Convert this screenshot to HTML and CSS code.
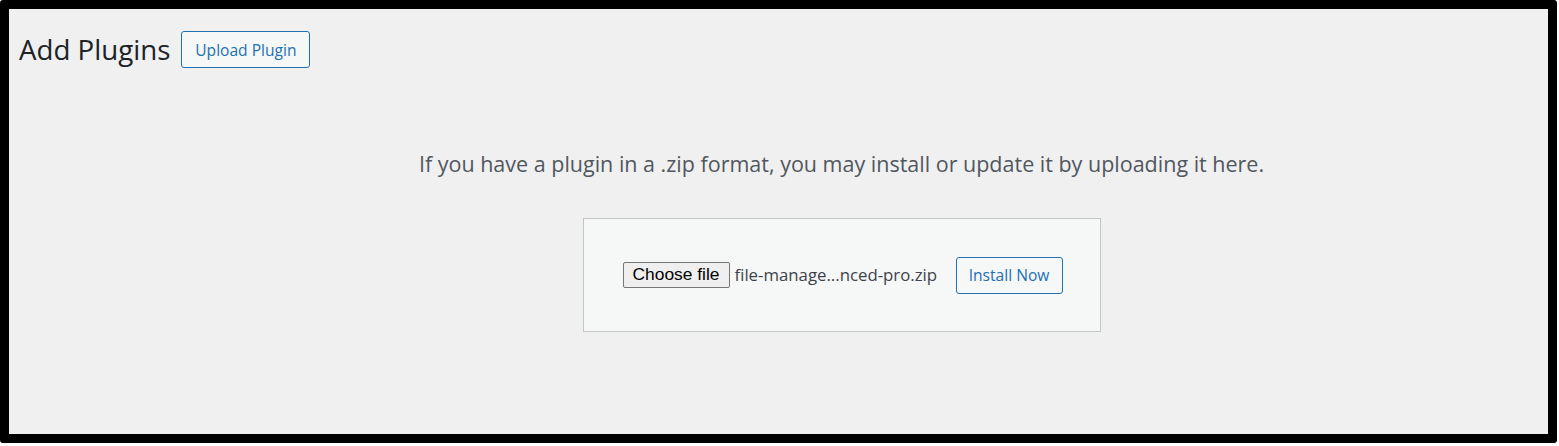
FILE: index.html
```html
<!DOCTYPE html>
<html lang="en">
<head>
<meta charset="utf-8">
<title>Add Plugins</title>
<link rel="stylesheet" href="styles.css">
</head>
<body>
<div class="frame">
  <div class="wrap">
    <div class="header">
      <h1 class="title">Add Plugins</h1>
      <a class="btn upload-btn" href="#">Upload Plugin</a>
    </div>
    <div class="upload">
      <p class="help">If you have a plugin in a .zip format, you may install or update it by uploading it here.</p>
      <form class="form">
        <span class="file">
          <button type="button" class="choose">Choose file</button>
          <span class="fname">file-manage...nced-pro.zip</span>
        </span>
        <button type="button" class="btn install">Install Now</button>
      </form>
    </div>
  </div>
</div>
</body>
</html>
```
FILE: styles.css
```css
html, body {
  margin: 0;
  padding: 0;
  background: #ffffff;
}
.frame {
  width: 1557px;
  height: 443px;
  box-sizing: border-box;
  border: 9px solid #000;
  border-radius: 3px;
  background: #f0f0f1;
  font-family: "Open Sans", "Noto Sans", sans-serif;
}
.wrap {
  padding: 22px 10px 0 10px;
}
.header {
  display: flex;
  align-items: center;
  gap: 11px;
}
.title {
  margin: 0;
  font-size: 27.7px;
  font-weight: 400;
  color: #1d2327;
  line-height: 37px;
}
.btn {
  display: inline-flex;
  align-items: center;
  justify-content: center;
  box-sizing: border-box;
  border: 1px solid #2271b1;
  border-radius: 3px;
  background: #f6f7f7;
  color: #2271b1;
  font-family: "Open Sans", "Noto Sans", sans-serif;
  font-size: 15.6px;
  text-decoration: none;
  padding: 0;
}
.upload-btn {
  width: 129px;
  height: 37px;
}
.upload {
  display: flex;
  flex-direction: column;
  align-items: center;
  padding-left: 126px;
}
.help {
  margin: 0;
  padding: 81px 0 0 0;
  font-size: 21.5px;
  line-height: 30px;
  color: #50575e;
}
.form {
  margin-top: 39px;
  margin-left: 0;
  width: 518px;
  height: 114px;
  box-sizing: border-box;
  border: 1px solid #c3c4c7;
  background: #f6f7f7;
  display: flex;
  align-items: center;
  justify-content: space-between;
  padding: 0 37px 0 39px;
}
.file {
  display: flex;
  align-items: center;
  gap: 5px;
  margin-top: -1px;
}
.choose {
  font-family: "Liberation Sans", Arial, sans-serif;
  font-size: 17.4px;
  color: #000;
  background: #efefef;
  border: 1px solid #767676;
  border-radius: 2px;
  width: 107px;
  height: 26px;
  padding: 0;
}
.fname {
  font-size: 16.8px;
  color: #3c434a;
}
.install {
  width: 107px;
  height: 37px;
}
```
